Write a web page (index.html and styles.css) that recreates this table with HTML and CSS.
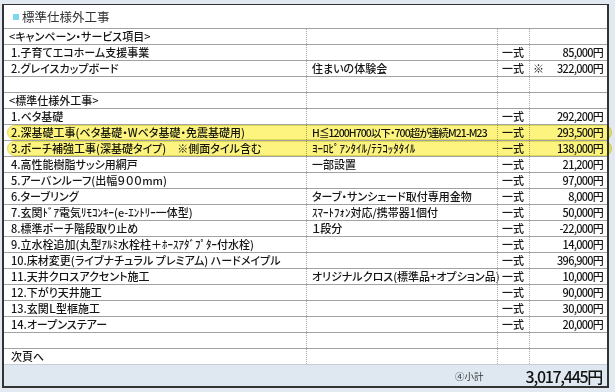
FILE: index.html
```html
<!DOCTYPE html>
<html lang="ja">
<head>
<meta charset="utf-8">
<link rel="stylesheet" href="styles.css">
</head>
<body>
<div class="sheet">
  <div class="title"><span class="sq"></span><span>標準仕様外工事</span></div>

  <div class="row"><div class="c1 hd">&lt;キャンペーン・サービス項目&gt;</div><div></div><div></div><div></div></div>
  <div class="row"><div class="c1">1.子育てエコホーム支援事業</div><div class="c2"></div><div class="c3">一式</div><div class="c4"><span class="amt">85,000円</span></div></div>
  <div class="row"><div class="c1">2.グレイスカップボード</div><div class="c2">住まいの体験会</div><div class="c3">一式</div><div class="c4 split"><span>※</span><span class="amt">322,000円</span></div></div>
  <div class="row"><div></div><div></div><div></div><div></div></div>
  <div class="row"><div class="c1 hd">&lt;標準仕様外工事&gt;</div><div></div><div></div><div></div></div>
  <div class="row"><div class="c1">1.ベタ基礎</div><div class="c2"></div><div class="c3">一式</div><div class="c4"><span class="amt">292,200円</span></div></div>
  <div class="row mark"><div class="c1">2.深基礎工事(ベタ基礎・Wベタ基礎・免震基礎用)</div><div class="c2 tight">H≦1200H700以下・700超が連続M21-M23</div><div class="c3">一式</div><div class="c4"><span class="amt">293,500円</span></div></div>
  <div class="row mark"><div class="c1">3.ポーチ補強工事(深基礎タイプ)　※側面タイル含む</div><div class="c2">ﾖｰﾛﾋﾟｱﾝﾀｲﾙ/ﾃﾗｺｯﾀﾀｲﾙ</div><div class="c3">一式</div><div class="c4"><span class="amt">138,000円</span></div></div>
  <div class="row"><div class="c1">4.高性能樹脂サッシ用網戸</div><div class="c2">一部設置</div><div class="c3">一式</div><div class="c4"><span class="amt">21,200円</span></div></div>
  <div class="row"><div class="c1">5.アーバンルーフ(出幅９００mm)</div><div class="c2"></div><div class="c3">一式</div><div class="c4"><span class="amt">97,000円</span></div></div>
  <div class="row"><div class="c1">6.ターブリング</div><div class="c2">ターブ・サンシェード取付専用金物</div><div class="c3">一式</div><div class="c4"><span class="amt">8,000円</span></div></div>
  <div class="row"><div class="c1">7.玄関ﾄﾞｱ電気ﾘﾓｺﾝｷｰ(e-ｴﾝﾄﾘｰ一体型)</div><div class="c2">ｽﾏｰﾄﾌｫﾝ対応/携帯器1個付</div><div class="c3">一式</div><div class="c4"><span class="amt">50,000円</span></div></div>
  <div class="row"><div class="c1">8.標準ポーチ階段取り止め</div><div class="c2">１段分</div><div class="c3">一式</div><div class="c4"><span class="amt">-22,000円</span></div></div>
  <div class="row"><div class="c1">9.立水栓追加(丸型ｱﾙﾐ水栓柱＋ﾎｰｽｱﾀﾞﾌﾟﾀｰ付水栓)</div><div class="c2"></div><div class="c3">一式</div><div class="c4"><span class="amt">14,000円</span></div></div>
  <div class="row"><div class="c1">10.床材変更(ライブナチュラル プレミアム) ハードメイプル</div><div class="c2"></div><div class="c3">一式</div><div class="c4"><span class="amt">396,900円</span></div></div>
  <div class="row"><div class="c1">11.天井クロスアクセント施工</div><div class="c2">オリジナルクロス(標準品+オプション品)</div><div class="c3">一式</div><div class="c4"><span class="amt">10,000円</span></div></div>
  <div class="row"><div class="c1">12.下がり天井施工</div><div class="c2"></div><div class="c3">一式</div><div class="c4"><span class="amt">90,000円</span></div></div>
  <div class="row"><div class="c1">13.玄関Ｌ型框施工</div><div class="c2"></div><div class="c3">一式</div><div class="c4"><span class="amt">30,000円</span></div></div>
  <div class="row"><div class="c1">14.オープンステアー</div><div class="c2"></div><div class="c3">一式</div><div class="c4"><span class="amt">20,000円</span></div></div>
  <div class="row"><div></div><div></div><div></div><div></div></div>
  <div class="row"><div class="c1">次頁へ</div><div></div><div></div><div></div></div>

  <div class="total">
    <div class="t-label">④小計</div>
    <div class="t-amt">3,017,445円</div>
  </div>
</div>
</body>
</html>
```

FILE: styles.css
```css
* { box-sizing: border-box; }
html, body { margin: 0; padding: 0; }
body {
  width: 615px;
  height: 392px;
  overflow: hidden;
  background: #e2e9f0;
  font-family: "Noto Sans CJK JP", "Noto Sans", sans-serif;
  color: #151515;
}
.sheet {
  margin: 4px 6px 0 2px;
  background: #fff;
  border-top: 1px solid #333;
  border-left: 2px solid #333;
  border-right: 2px solid #333;
  border-bottom: 2px solid #333;
}
.title {
  height: 23px;
  display: flex;
  align-items: center;
  gap: 3px;
  padding-left: 9px;
  font-size: 12.5px;
  color: #333;
}
.title .sq {
  width: 6px;
  height: 6px;
  background: #7fd7ef;
}
.row {
  position: relative;
  display: grid;
  grid-template-columns: 302px 191px 32px 1fr;
  height: 16px;
  border-top: 1px solid #a2a2a2;
  font-size: 11px;
  line-height: 15px;
  font-weight: 500;
  font-feature-settings: "palt";
}
.row > div {
  white-space: nowrap;
  overflow: visible;
}
.row > div + div {
  border-left: 1px dotted #a8a8a8;
}
.c1 { padding-left: 7px; }
.c1.hd { padding-left: 5px; }
.c2 { padding-left: 5px; }
.c3 { padding-left: 4px; }
.c4 { text-align: right; padding-right: 4px; }
.c4.split {
  display: flex;
  justify-content: space-between;
  padding-left: 3px;
}
.amt { letter-spacing: -0.75px; }
.c2.tight {
  font-size: 10.5px;
  letter-spacing: -0.9px;
  overflow: hidden;
}
.row.mark::before {
  content: "";
  position: absolute;
  left: 3px;
  right: -5px;
  top: 0;
  bottom: 0;
  background: #fcf47e;
  border: 1px solid #e2d858;
  border-radius: 8px;
  mix-blend-mode: multiply;
}
.total {
  display: flex;
  align-items: center;
  justify-content: flex-end;
  height: 22px;
  background: #dfe8f1;
  border-top: 1px solid #c8cfd6;
  padding-right: 5px;
}
.t-label {
  font-size: 9.5px;
  color: #333;
  margin-right: 42px;
}
.t-amt {
  font-size: 16px;
  font-weight: 500;
  letter-spacing: -1.3px;
  color: #111;
}
```
